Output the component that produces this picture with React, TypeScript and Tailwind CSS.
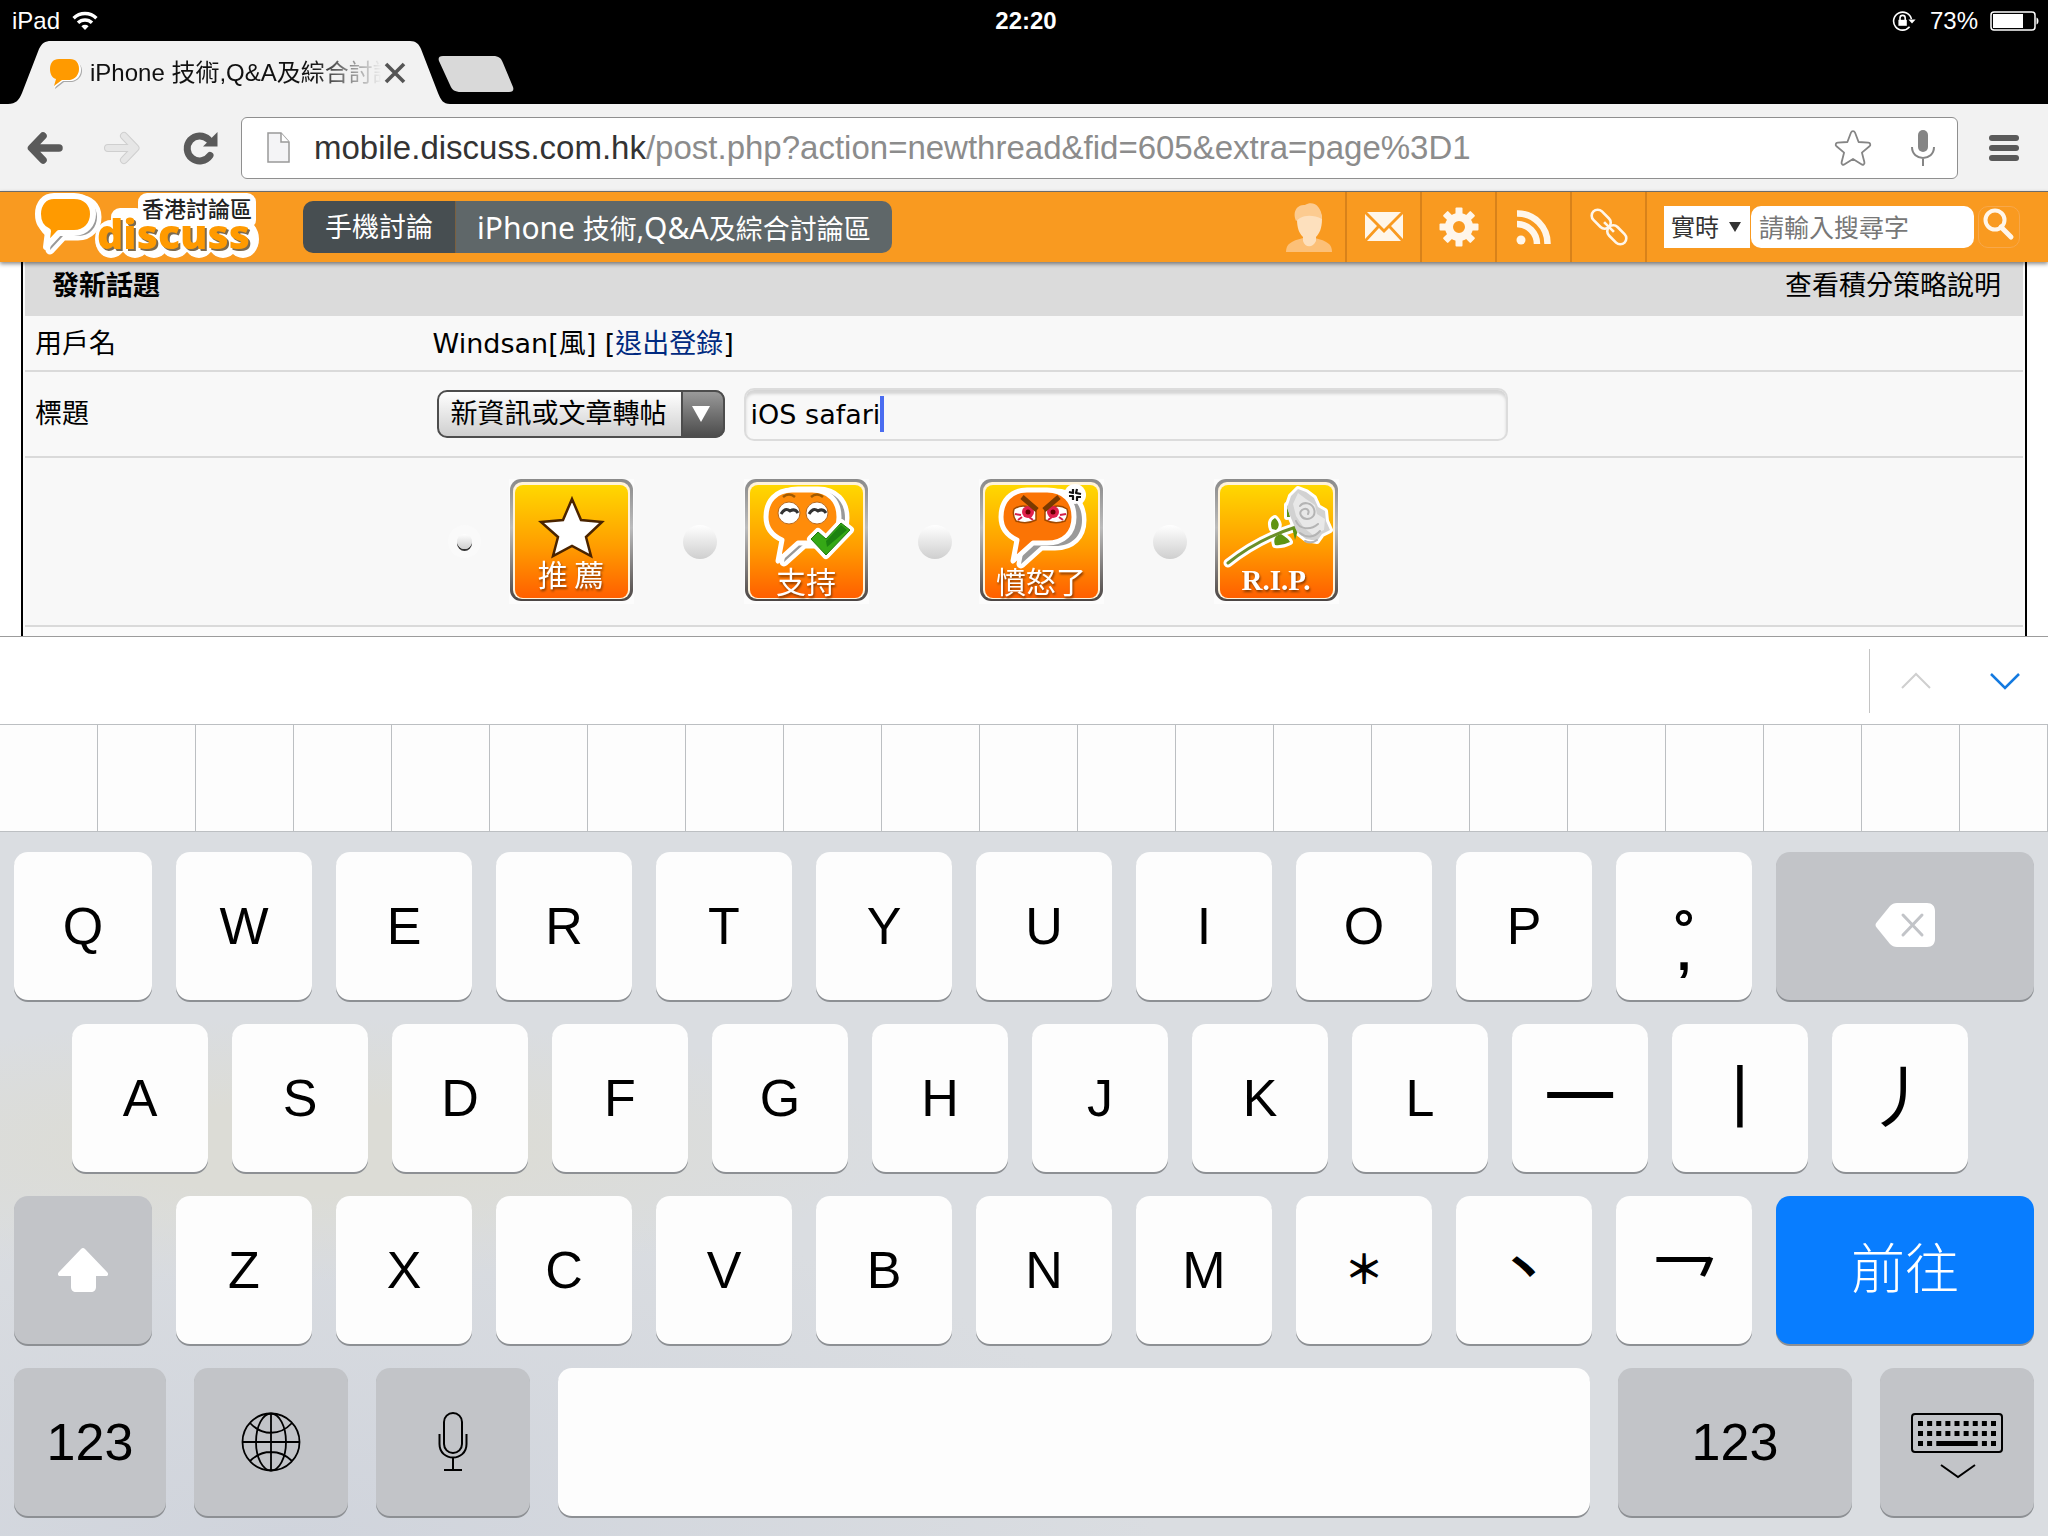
import { useState, type ReactNode } from 'react';
import clsx from 'clsx';

const UI_FONT = "font-['Liberation_Sans','Noto_Sans_CJK_TC',sans-serif]";
const FORM_FONT = "font-['DejaVu_Sans','Noto_Sans_CJK_TC',sans-serif]";
const NAV_FONT = "font-['Noto_Sans','Noto_Sans_CJK_TC',sans-serif]";

// ── Status bar ────────────────────────────────────────────────────────────────

function StatusBar() {
  return (
    <div className="grid h-10 grid-cols-3 items-center pt-0.5 pr-2 pl-3 text-2xl text-white">
      <div className="flex items-center gap-3">
        <span>iPad</span>
        <svg width="26" height="20" viewBox="0 0 26 20" fill="none" stroke="#fff" strokeWidth="3.4">
          <path d="M1.6 7.2a16.2 16.2 0 0 1 22.8 0" />
          <path d="M6 11.8a10 10 0 0 1 14 0" />
          <path d="M9.4 15.2a5.2 5.2 0 0 1 7.2 0L13 19z" fill="#fff" stroke="none" />
        </svg>
      </div>
      <span className="text-center font-bold">22:20</span>
      <div className="flex items-center justify-end gap-3">
        <svg width="26" height="22" viewBox="0 0 26 22" fill="none" stroke="#fff" strokeWidth="1.6">
          <path d="M17.6 16.8a9 9 0 1 1 1.8-7.6" />
          <path d="M16.4 9.4h7.2l-3.6 4.2z" fill="#fff" stroke="none" />
          <path d="M8 10V8a2.6 2.6 0 0 1 5.2 0v2" />
          <path d="M6.4 9.8h8.4v6H6.4z" fill="#fff" stroke="none" />
        </svg>
        <span>73%</span>
        <svg width="50" height="20" viewBox="0 0 50 20">
          <rect x="1" y="1" width="44" height="18" rx="3" fill="none" stroke="#fff" strokeWidth="1.5" />
          <rect x="3" y="3" width="30" height="14" fill="#fff" />
          <path d="M46.5 6.5c2.6.6 2.6 6.4 0 7z" fill="#fff" />
        </svg>
      </div>
    </div>
  );
}

// ── Browser chrome ────────────────────────────────────────────────────────────

function TabStrip() {
  return (
    <div className="flex h-16 pl-2">
      <div className="relative w-[442px] pl-10">
        <svg className="absolute inset-0" width="442" height="64" viewBox="0 0 442 64">
          <path
            fill="#f2f2f2"
            d="M0 64C8 64 11 60 14 53L31 9C34 3 37 1 43 1H402c6 0 9 3 11 8l17 44c3 7 5 11 12 11z"
          />
        </svg>
        <div className="relative flex h-full items-center gap-2 pt-0.5">
          <svg width="34" height="32" viewBox="0 0 34 32">
            <path fill="#a8a8a8" d="M14 4h10c7 0 10 5 10 10s-4 10-10 11h-8l-9 7 2-8z" />
            <path fill="#fff" d="M11 3h13c6 0 9 4 9 10s-4 10-9 11h-9l-9 7 2-9z" />
            <path fill="#ff9a00" d="M11 2h11c6 0 9 4 9 10s-4 10-9 11h-8l-8 6 2-7C4 21 2 17 2 12 2 6 5 2 11 2z" />
          </svg>
          <span className="w-[292px] overflow-hidden text-2xl whitespace-nowrap text-[#111] [mask-image:linear-gradient(to_right,#000_76%,transparent)]">
            iPhone 技術,Q&amp;A及綜合討論區
          </span>
          <button aria-label="Close tab" className="-ml-2.5 p-1">
            <svg width="22" height="22" viewBox="0 0 22 22" stroke="#555" strokeWidth="3.600">
              <path d="M2 2l18 18M20 2L2 20" />
            </svg>
          </button>
        </div>
      </div>
      <button aria-label="New tab" className="-ml-3">
        <svg width="78" height="40" viewBox="0 0 78 40">
          <path fill="#d9d9d9" d="M5 4h50c6 0 8 2 10 7l10 24c1 3 0 5-4 5H23c-6 0-9-2-11-7L1 9C0 6 1 4 5 4z" />
        </svg>
      </button>
    </div>
  );
}

function Toolbar() {
  return (
    <div className="flex h-[87px] items-center bg-[#f2f2f2] px-6">
      <div className="flex w-[217px] shrink-0 items-center gap-[38px]">
        <button aria-label="Back">
          <svg width="40" height="36" viewBox="0 0 40 36" fill="none" stroke="#5a5a5a" strokeWidth="7.5" strokeLinecap="round" strokeLinejoin="round">
            <path d="M19 6L7.5 18 19 30M8 18h27" />
          </svg>
        </button>
        <button aria-label="Forward" disabled>
          <svg width="40" height="36" viewBox="0 0 40 36" fill="none" strokeLinecap="round" strokeLinejoin="round">
            <path d="M22 6l11.5 12L22 30M32 18H6" stroke="#cfcfcf" strokeWidth="8" />
            <path d="M22 6l11.5 12L22 30M32 18H6" stroke="#e6e6e6" strokeWidth="6" />
          </svg>
        </button>
        <button aria-label="Reload">
          <svg width="40" height="36" viewBox="0 0 40 36" fill="none">
            <path d="M30 25.5A12.5 12.5 0 1 1 28.5 9.5" stroke="#5a5a5a" strokeWidth="7" strokeLinecap="round" />
            <path d="M37.5 2v14.5H23z" fill="#5a5a5a" />
          </svg>
        </button>
      </div>
      <div className="flex h-[62px] flex-1 items-center rounded-md border border-[#8f8f8f] bg-white pr-[19px] pl-6">
        <svg width="26" height="34" viewBox="0 0 26 34">
          <path d="M2 2h13l8 9v20H2z" fill="#f4f4f6" stroke="#999" strokeWidth="1.5" />
          <path d="M15 2v9h8" fill="#fff" stroke="#999" strokeWidth="1.5" />
        </svg>
        <div className="ml-[22px] flex-1 text-[33px] leading-10 text-[#333]">
          mobile.discuss.com.hk
          <span className="text-[#8c8c8c]">/post.php?action=newthread&amp;fid=605&amp;extra=page%3D1</span>
        </div>
        <button aria-label="Bookmark">
          <svg width="38" height="38" viewBox="0 0 38 38" fill="none" stroke="#858585" strokeWidth="1.8" strokeLinejoin="round">
            <path d="M17 3.5c.8-1.8 3.2-1.8 4 0l3.6 9.500 9.7.7c2 .2 2.7 2.4 1.2 3.6l-7.6 6.3 2.5 9.6c.5 2-1.4 3.2-3 2.1L19 30l-8.4 5.3c-1.6 1.1-3.5-.1-3-2.1l2.500-9.6-7.6-6.3c-1.5-1.2-.8-3.4 1.2-3.6l9.7-.7z" />
          </svg>
        </button>
        <button aria-label="Voice search" className="ml-9">
          <svg width="30" height="38" viewBox="0 0 30 38" fill="none" stroke="#858585" strokeWidth="2">
            <rect x="10" y="1" width="10" height="22" rx="5" fill="#858585" stroke="none" />
            <path d="M4 18c0 14.5 22 14.5 22 0M15 29v8" />
          </svg>
        </button>
      </div>
      <button aria-label="Menu" className="ml-[31px] flex w-[35px] flex-col gap-1">
        <span className="h-1.5 w-[30px] rounded-full bg-[#5a5a5a]" />
        <span className="h-1.5 w-[30px] rounded-full bg-[#5a5a5a]" />
        <span className="h-1.5 w-[30px] rounded-full bg-[#5a5a5a]" />
      </button>
    </div>
  );
}

// ── Site header ───────────────────────────────────────────────────────────────

function Logo() {
  const bubble = 'M22 4h20c12 0 19 8 19 18s-7 19-19 19H27L14 55l2-16C9 36 6 30 6 22 6 12 12 4 22 4z';
  return (
    <svg width="232" height="70" viewBox="0 0 232 70">
      <g strokeLinejoin="round">
        <path d={bubble} transform="translate(4 3)" fill="#999" stroke="#fff" strokeWidth="9" />
        <path d={bubble} transform="translate(4 3)" fill="#999" />
        <path d={bubble} fill="#ff9a00" stroke="#fff" strokeWidth="6" />
        {/* white sticker backing behind both lines of lettering */}
        <g fill="#fff">
          <rect x="106" y="1" width="118" height="36" rx="9" />
          <rect x="79" y="16" width="34" height="40" rx="9" />
          <rect x="66" y="30" width="158" height="30" rx="9" />
          {[79, 103, 122, 143, 167, 191, 211].map((cx) => (
            <ellipse key={cx} cx={cx} cy="47" rx="16" ry="19" />
          ))}
        </g>
        <g className="drop-shadow-[2px_2px_0_#7a6a50]">
          <text x="65" y="57" fill="#ff9a00" fontFamily="'Open Sans'" fontWeight="800" fontSize="41">discuss</text>
        </g>
        <text x="110" y="25" fill="#222" fontSize="22" fontWeight="500" fontFamily="'Noto Sans CJK TC'">香港討論區</text>
      </g>
    </svg>
  );
}

const NAV_ICONS: { label: string; icon: ReactNode }[] = [
  {
    label: '會員',
    icon: (
      <svg width="48" height="50" viewBox="0 0 48 50">
        <path fill="#fcc078" d="M1 50c0-8 5-11 17-14h12c12 3 17 6 17 14z" />
        <path fill="#fde0bd" d="M12 17c0-9 5-14 12-14s13 5 13 14c0 10-3 15-6 18v4c-3 7-11 7-13 0v-4c-4-4-6-9-6-18z" />
        <path fill="#fccb90" d="M11 19C7 10 12 2 20 3c8-5 17 1 17 14-8-4-16-4-22-1z" />
      </svg>
    ),
  },
  {
    label: '短訊',
    icon: (
      <svg width="40" height="30" viewBox="0 0 40 30" fill="#fff6ea">
        <path d="M3 0h34L20 17z" />
        <path d="M1 2l12 12L1 27zM39 2L27 14l12 13zM15 16l5 5 5-5 12 13H3z" />
      </svg>
    ),
  },
  {
    label: '設定',
    icon: (
      <svg width="40" height="40" viewBox="0 0 40 40" fill="#fff6ea">
        <circle cx="20" cy="20" r="10" fill="none" stroke="#fff6ea" strokeWidth="8" />
        {[0, 45, 90, 135, 180, 225, 270, 315].map((angle) => (
          <rect key={angle} x="16.5" y="0.5" width="7" height="9" rx="1" transform={`rotate(${angle} 20 20)`} />
        ))}
      </svg>
    ),
  },
  {
    label: 'RSS',
    icon: (
      <svg width="36" height="36" viewBox="0 0 36 36" fill="none" stroke="#fff6ea" strokeWidth="6.5">
        <circle cx="5" cy="31" r="4.5" fill="#fff6ea" stroke="none" />
        <path d="M1 15a20 20 0 0 1 20 20M1 4.5A30 30 0 0 1 31.5 35" />
      </svg>
    ),
  },
  {
    label: '連結',
    icon: (
      <svg width="40" height="40" viewBox="0 0 40 40" fill="none" stroke="#fff6ea" strokeWidth="2.600">
        <g transform="rotate(45 20 20)">
          <rect x="-2" y="14" width="22" height="12" rx="6" />
          <rect x="20" y="14" width="22" height="12" rx="6" />
          <path d="M13 20h14" />
        </g>
      </svg>
    ),
  },
];

function SiteHeader() {
  return (
    <header className={clsx('relative z-10 flex h-[71px] items-stretch border-t border-[#6b6b6b] bg-[#f99a20] shadow-[0_2px_4px_rgba(0,0,0,0.45)]', NAV_FONT)}>
      <a href="#home" className="ml-8 w-[271px]" aria-label="discuss 香港討論區">
        <Logo />
      </a>
      <nav className="flex h-[52px] items-center self-center overflow-hidden rounded-[10px] text-[27px] text-white">
        <a href="#mobile" className="flex h-full items-center border-r border-[#7a6040] bg-[#474e51] px-[22px]">手機討論</a>
        <a href="#iphone" className="flex h-full items-center bg-[#5f6769] px-[21px]">
          <span className="whitespace-pre">
            <span className="text-[30px]">iPhone </span>技術,<span className="text-[30px]">Q&amp;A</span>及綜合討論區
          </span>
        </a>
      </nav>
      <div className="ml-auto flex">
        {NAV_ICONS.map(({ label, icon }) => (
          <button
            key={label}
            aria-label={label}
            className="flex w-[75px] items-center justify-center border-r-2 border-[#d8821a]"
          >
            {icon}
          </button>
        ))}
      </div>
      <form className="ml-[17px] flex items-center pr-7">
        <div className="relative">
          <select aria-label="搜尋範圍" className="h-[42px] w-[86px] appearance-none bg-white pl-[7px] text-2xl text-[#333]">
            <option>實時</option>
          </select>
          <svg className="pointer-events-none absolute top-4 right-2" width="14" height="10" viewBox="0 0 14 10">
            <path d="M1 0h12L7 10z" fill="#333" />
          </svg>
        </div>
        <input
          type="search"
          aria-label="搜尋"
          placeholder="請輸入搜尋字"
          className="ml-px h-[42px] w-[223px] rounded-[10px] bg-white px-2 text-[25px] placeholder:text-[#777]"
        />
        <button type="button" aria-label="搜尋" className="ml-1 flex h-[42px] w-[42px] justify-center rounded-[10px] border border-[#f8a84a]">
          <svg width="36" height="36" viewBox="0 0 36 36" fill="none" stroke="#fff6ea">
            <circle cx="14" cy="13" r="9.5" strokeWidth="4" />
            <path d="M20 20l10 10" strokeWidth="5" strokeLinecap="round" />
          </svg>
        </button>
      </form>
    </header>
  );
}

// ── New thread form ───────────────────────────────────────────────────────────

const SPEECH = 'M48 11h20c17 0 27 11 27 27S85 64 68 64H54L34 82l4-21C27 56 22 48 22 38c0-16 10-27 26-27z';

function StarArt() {
  return (
    <path
      d="M63 20l9 21 21 2-16 15 5 19-19-10-19 10 5-19-17-15 22-2z"
      fill="#fff"
      stroke="#4a2400"
      strokeWidth="2.5"
    />
  );
}

function SupportArt() {
  return (
    <g strokeLinejoin="round">
      <path d={SPEECH} transform="translate(6 1)" fill="#999" stroke="#fff" strokeWidth="9" />
      <path d={SPEECH} transform="translate(6 1)" fill="#999" />
      <path d={SPEECH} fill="#ff8c0a" stroke="#fff" strokeWidth="5" />
      <circle cx="45" cy="34" r="11" fill="#fff" stroke="#b86a20" />
      <circle cx="73" cy="34" r="11" fill="#fff" stroke="#b86a20" />
      <path d="M37 35q4-7 9-3 5-3 8 2M65 35q4-7 9-3 5-3 8 2" fill="none" stroke="#333" strokeWidth="3" />
      <path d="M39 18q6-5 12 0M67 18q6-5 12 0" fill="none" stroke="#a05a00" strokeWidth="2.5" />
      <path d="M67 60l7-7 8 7 15-16 9 7-24 25z" fill="#35a816" stroke="#fff" strokeWidth="8" />
      <path d="M67 60l7-7 8 7 15-16 9 7-24 25z" fill="#35a816" stroke="#1e7a0c" />
      <path d="M82 62l15-16 6 5-20 17z" fill="#1c8210" />
    </g>
  );
}

function AngryArt() {
  return (
    <g strokeLinejoin="round">
      <circle cx="96" cy="16" r="11" fill="#fff" />
      <path d={SPEECH} transform="translate(8 3)" fill="#999" stroke="#fff" strokeWidth="9" />
      <path d={SPEECH} transform="translate(8 3)" fill="#999" />
      <path d={SPEECH} fill="#fb7405" stroke="#fff" strokeWidth="5" />
      <circle cx="96" cy="16" r="9" fill="#fff" />
      <path d="M35 30q10-7 22 2v9q-10 5-20 1-4-6-2-12zM88 30q-10-7-22 2v9q10 5 20 1 4-6 2-12z" fill="#fff" stroke="#a04a00" strokeWidth="1.5" />
      <path d="M36 35l6 1M39 41l4-3M54 41l-4-3M87 35l-6 1M84 41l-4-3M69 41l4-3" stroke="#d4204a" strokeWidth="2" />
      <circle cx="49" cy="33" r="6" fill="#e0204c" />
      <circle cx="74" cy="33" r="6" fill="#e0204c" />
      <circle cx="49" cy="33" r="2.5" fill="#600" />
      <circle cx="74" cy="33" r="2.5" fill="#600" />
      <path d="M43 18l15 13M80 18L65 31" stroke="#7a3a00" strokeWidth="5" />
      <path d="M90 13l4 1v-4M98 10l-1 4 5 1M102 18l-4 0 0 4M94 21l0-4-4 0" fill="none" stroke="#111" strokeWidth="2.2" />
    </g>
  );
}

function RoseArt() {
  const bloom = 'M84 10l8 3 8 6 4 9 7 4 1 10 4 9-8 4-5 7-11-2-9-7-6-14-4-10 4-12z';
  return (
    <g strokeLinejoin="round" strokeLinecap="round">
      <g stroke="#fff" strokeWidth="6" fill="#fff">
        <path d={bloom} />
        <path d="M14 84q30-24 68-36" fill="none" strokeWidth="9" />
        <path d="M58 50q-3-8 3-11 7 7 1 12zM61 66q-3-9 6-11 8 5 9 8-8 4-15 3zM73 38v-12" />
      </g>
      <path d="M14 84q30-24 68-36" fill="none" stroke="#6b8f2a" strokeWidth="3" />
      <path d="M58 50q-3-8 3-11 7 7 1 12zM61 66q-3-9 6-11 8 5 9 8-8 4-15 3zM73 26l3 12h-3zM78 48l6 3-3 10z" fill="#5f9412" />
      <path d={bloom} fill="#d2d2d2" />
      <path d="M84 14l8 6 9 6 2 9 8 5-1 11-11 5-9-7-8-12-3-12z" fill="#e8e8e8" />
      <path d="M86 27c4-5 12-3 14 3s-2 10-7 10-9-6-5-9 8 0 6 4M82 42c3 8 14 10 22 3M86 54c6 5 14 5 20-2M91 62c4 2 8 2 12-1" fill="none" stroke="#b4b4b4" strokeWidth="2" />
    </g>
  );
}

const TILES: { id: string; text: string; baseline: number; serif?: boolean; art: ReactNode }[] = [
  { id: 'recommend', text: '推 薦', baseline: 107, art: <StarArt /> },
  { id: 'support', text: '支持', baseline: 114, art: <SupportArt /> },
  { id: 'angry', text: '憤怒了', baseline: 114, art: <AngryArt /> },
  { id: 'rip', text: 'R.I.P.', baseline: 111, serif: true, art: <RoseArt /> },
];

function Tile({ text, baseline, serif, art }: { text: string; baseline: number; serif?: boolean; art: ReactNode }) {
  return (
    <svg width="125" height="125" viewBox="0 0 125 125">
      <defs>
        <linearGradient id="tile-fill" x2="0" y2="1">
          <stop offset="0" stopColor="#ffd800" />
          <stop offset="0.55" stopColor="#ff9c00" />
          <stop offset="1" stopColor="#ff5f00" />
        </linearGradient>
        <linearGradient id="tile-frame" x2="0" y2="1">
          <stop offset="0" stopColor="#8a8a8a" />
          <stop offset="0.4" stopColor="#bcbcbc" />
          <stop offset="1" stopColor="#4c4644" />
        </linearGradient>
      </defs>
      <rect width="125" height="125" fill="#fff" opacity="0.6" />
      <rect x="1" width="123" height="122" rx="11" fill="url(#tile-frame)" />
      <rect x="4" y="3" width="117" height="117" rx="9" fill="#fff3da" />
      <rect x="6" y="6" width="113" height="113" rx="8" fill="url(#tile-fill)" />
      {art}
      <g
        fontFamily={serif ? "'Liberation Serif', serif" : "'Noto Sans CJK TC', sans-serif"}
        fontSize={serif ? 29 : 30}
        fontWeight={serif ? 700 : 400}
        textAnchor="middle"
        className="drop-shadow-[1px_2px_1px_#8a3c00]"
      >
        <text x="62" y={baseline} fill="#fff">{text}</text>
      </g>
    </svg>
  );
}

function ThreadForm() {
  const [title, setTitle] = useState('iOS safari');
  const [tile, setTile] = useState('recommend');

  return (
    <form className={clsx('mx-[21px] flex-1 border-x-2 border-black bg-[#fbfbfb] px-0.5 text-[27px] leading-8 text-black', FORM_FONT)}>
      <div className="flex h-[54px] items-center justify-between bg-[#dbdbdb] pr-[22px] pb-1.5 pl-[27px]">
        <h1 className="font-bold">發新話題</h1>
        <a href="#credits">查看積分策略說明</a>
      </div>

      <div className="grid h-14 grid-cols-[1fr_4fr] items-center border-b-2 border-[#dadada] bg-[#f8f8f8] pt-0.5">
        <span className="pl-2.5">用戶名</span>
        <span className="pl-2">
          Windsan[風] [<a href="#logout" className="text-[#002a80]">退出登錄</a>]
        </span>
      </div>

      <div className="grid h-[86px] grid-cols-[1fr_4fr] items-center border-b-2 border-[#dadada] bg-[#f8f8f8]">
        <label htmlFor="subject" className="pl-2.5">標題</label>
        <div className="flex items-center gap-[19px] pl-3">
          <div className="relative">
            <select
              aria-label="分類"
              className="h-12 w-72 appearance-none rounded-[10px] border-2 border-[#4d4d4d] bg-linear-to-b from-white to-[#cfcfcf] pl-3"
            >
              <option>新資訊或文章轉帖</option>
            </select>
            <span className="pointer-events-none absolute inset-y-0 right-0 flex w-11 items-center rounded-r-[10px] border-2 border-[#4d4d4d] bg-linear-to-b from-[#9a9a9a] to-[#4d4d4d] pl-2">
              <svg width="20" height="18" viewBox="0 0 20 18">
                <path d="M1 1h18l-9 16z" fill="#fff" />
              </svg>
            </span>
          </div>
          <div className="relative">
            <input
              id="subject"
              type="text"
              value={title}
              onChange={(e) => setTitle(e.target.value)}
              className="h-[53px] w-[764px] rounded-[10px] border-2 border-[#dcdcdc] bg-[#f8f8f8] px-[5px] shadow-[inset_0_4px_3px_rgba(0,0,0,0.14)]"
            />
            <span className="absolute top-2 left-[136px] h-9 w-1 bg-[#4a6cf0]" />
          </div>
        </div>
      </div>

      <div className="grid h-[169px] grid-cols-[1fr_4fr] items-center border-b-2 border-[#dadada] bg-[#f8f8f8]">
        <span />
        <div className="flex gap-[49px] pl-[23px]">
          {TILES.map(({ id, ...art }) => (
            <label key={id} className="flex items-center gap-[27px]">
              <span className="flex size-[34px] items-center justify-center">
                <input
                  type="radio"
                  name="icon"
                  aria-label={art.text}
                  checked={tile === id}
                  onChange={() => setTile(id)}
                  className="size-[34px] appearance-none rounded-full bg-linear-to-b from-white to-[#cfcfcf] checked:size-[15px] checked:shadow-[0_2px_0_#333,0_0_0_9px_#fafafa]"
                />
              </span>
              <Tile {...art} />
            </label>
          ))}
        </div>
      </div>
    </form>
  );
}

// ── Keyboard ──────────────────────────────────────────────────────────────────

interface KeyProps {
  label: string;
  children?: ReactNode;
  tone?: 'light' | 'dark' | 'blue';
  className?: string;
}

function Key({ label, children, tone = 'light', className = 'flex-[136]' }: KeyProps) {
  return (
    <button
      aria-label={label}
      className={clsx(
        'flex h-[148px] min-w-0 items-center justify-center rounded-[14px] shadow-[0_2px_0_#8d9094]',
        tone === 'light' && 'bg-[#fdfdfd] text-black',
        tone === 'dark' && 'bg-[#c2c4c8] text-black',
        tone === 'blue' && 'bg-[#087dff] text-white',
        className,
      )}
    >
      {children ?? label}
    </button>
  );
}

function StrokeKey({ stroke, className = 'text-[68px]' }: { stroke: string; className?: string }) {
  return (
    <Key label={stroke}>
      <span className={clsx('leading-none', className)}>{stroke}</span>
    </Key>
  );
}

function AccessoryBar() {
  return (
    <div className="flex h-[88px] items-center justify-end border-t border-[#9c9c9c] bg-white pr-[27px]">
      <div className="flex h-16 items-center gap-[57px] border-l border-[#c4c4c4] pl-[30px]">
        <button aria-label="Previous field" disabled>
          <svg width="32" height="20" viewBox="0 0 32 20" fill="none" stroke="#cfcfcf" strokeWidth="2">
            <path d="M2 17L16 3l14 14" />
          </svg>
        </button>
        <button aria-label="Next field">
          <svg width="32" height="20" viewBox="0 0 32 20" fill="none" stroke="#147ae0" strokeWidth="2.5">
            <path d="M2 3l14 14L30 3" />
          </svg>
        </button>
      </div>
    </div>
  );
}

function Candidates() {
  return (
    <div className="flex h-[108px] border-y border-[#bcbfc2] bg-[#fdfdfd]">
      {Array.from({ length: 20 }, (_, i) => (
        <span key={i} className="w-[98px] shrink-0 border-r border-[#bcbfc2]" />
      ))}
      <span className="flex-1 border-r border-[#bcbfc2]" />
    </div>
  );
}

function Keyboard() {
  return (
    <div className="flex flex-col gap-6 bg-[#dadde1] bg-[radial-gradient(ellipse_at_15%_45%,#dcdcd6_0%,#dcdcd6_8%,transparent_24%),radial-gradient(ellipse_at_14%_100%,#d0d4dc_0%,transparent_35%)] px-3.5 pt-5 pb-5 text-[52px]">
      <div className="flex gap-6">
        <Key label="Q" className="flex-[138]" />
        {['W', 'E', 'R', 'T', 'Y', 'U', 'I', 'O', 'P'].map((k) => (
          <Key key={k} label={k} />
        ))}
        <Key label="°,">
          <span className="flex flex-col pt-7 leading-6 font-bold">
            <span>°</span>
            <span>,</span>
          </span>
        </Key>
        <Key label="Delete" tone="dark" className="flex-[258]">
          <svg width="60" height="46" viewBox="0 0 60 46">
            <path d="M22 0h30c5 0 8 3 8 8v28c0 5-3 8-8 8H22c-3 0-5-1-7-3L2 25c-2-2-2-4 0-6L15 3c2-2 4-3 7-3z" fill="#fff" />
            <path d="M28 12l19 20M47 12L28 32" stroke="#c2c4c8" strokeWidth="3" strokeLinecap="round" />
          </svg>
        </Key>
      </div>

      <div className="flex gap-6 pr-[66px] pl-[58px]">
        {['A', 'S', 'D', 'F', 'G', 'H', 'J', 'K', 'L'].map((k) => (
          <Key key={k} label={k} />
        ))}
        <StrokeKey stroke="一" className="text-[72px]" />
        <StrokeKey stroke="丨" />
        <StrokeKey stroke="丿" />
      </div>

      <div className="flex gap-6">
        <Key label="Shift" tone="dark" className="flex-[138]">
          <svg width="50" height="44" viewBox="0 0 50 44" fill="#fff">
            <path d="M23 1q2-2 4 0l22 23c2 2 1 4-1 4H38v11c0 3-2 5-5 5H18c-3 0-5-2-5-5V28H2c-2 0-3-2-1-4z" />
          </svg>
        </Key>
        {['Z', 'X', 'C', 'V', 'B', 'N', 'M'].map((k) => (
          <Key key={k} label={k} />
        ))}
        <Key label="＊">
          <span className="text-[40px] leading-none font-bold">＊</span>
        </Key>
        <StrokeKey stroke="丶" className="text-[48px] font-bold" />
        <StrokeKey stroke="乛" className="pt-8 text-[68px]" />
        <Key label="前往" tone="blue" className="flex-[258] text-[54px] font-light" />
      </div>

      <div className="flex gap-7">
        <Key label="123" tone="dark" className="flex-[152]" />
        <Key label="Next keyboard" tone="dark" className="flex-[154]">
          <svg width="60" height="60" viewBox="0 0 60 60" fill="none" stroke="#000" strokeWidth="1.8">
            <circle cx="30" cy="30" r="28.5" />
            <ellipse cx="30" cy="30" rx="15" ry="28.5" />
            <path d="M30 1.5v57M1.500 30h57M9 11c12 13 30 13 42 0M9 49c12-12 30-12 42 0" />
          </svg>
        </Key>
        <Key label="Dictation" tone="dark" className="flex-[154]">
          <svg width="30" height="60" viewBox="0 0 30 60" fill="none" stroke="#000" strokeWidth="2">
            <rect x="6" y="1" width="18" height="40" rx="9" />
            <path d="M1.5 22v10c0 18 27 18 27 0V22M15 46v12M6 58h18" />
          </svg>
        </Key>
        <Key label="Space" className="flex-[1032]">
          {''}
        </Key>
        <Key label="Numbers" tone="dark" className="flex-[234]">
          123
        </Key>
        <Key label="Hide keyboard" tone="dark" className="flex-[154] pt-2">
          <svg width="92" height="66" viewBox="0 0 92 66" fill="none" stroke="#000" strokeWidth="2">
            <rect x="1" y="1" width="90" height="38" rx="3" />
            <path d="M7 10.5h78M7 20.5h78" strokeWidth="5" strokeDasharray="5 4.125" />
            <path d="M7 30.5h5M16.1 30.5h5M25.3 30.5h41.4M70.9 30.5h5M80 30.5h5" strokeWidth="5" />
            <path d="M30 52l17 12 17-12" />
          </svg>
        </Key>
      </div>
    </div>
  );
}

export default function App() {
  return (
    <div className={clsx('flex min-h-screen flex-col bg-white', UI_FONT)}>
      <div className="bg-black">
        <StatusBar />
        <TabStrip />
        <Toolbar />
      </div>
      <main className="flex flex-1 flex-col">
        <SiteHeader />
        <ThreadForm />
      </main>
      <AccessoryBar />
      <Candidates />
      <Keyboard />
    </div>
  );
}
